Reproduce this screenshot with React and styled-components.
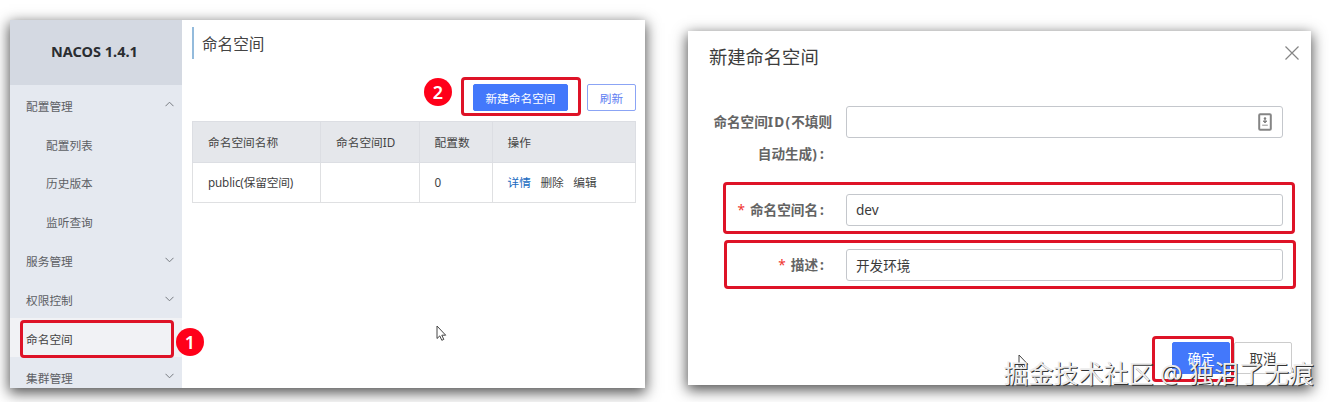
import React from "react";
import styled, { createGlobalStyle, css } from "styled-components";

const GlobalStyle = createGlobalStyle`
  *, *::before, *::after { box-sizing: border-box; }
  body {
    margin: 0;
    background: #fff;
    overflow: hidden;
    font-family: "Noto Sans", "Noto Sans CJK SC", sans-serif;
    color: #444;
  }
`;

const Stage = styled.main`
  position: relative;
  display: flex;
  align-items: flex-start;
  gap: 43px;
  width: 1329px;
  height: 402px;
  padding: 20px 0 0 10px;
  overflow: hidden;
`;

const Window = styled.section`
  flex: none;
  background: #fff;
  box-shadow: 0 4px 13px 1px rgba(0, 0, 0, 0.68);
`;

const ConsoleWindow = styled(Window)`
  display: flex;
  width: 635px;
  height: 368px;
`;

const Sidebar = styled.nav`
  flex: none;
  width: 172px;
  height: 100%;
  overflow: hidden;
  background: #e5e9f0;
`;

const Brand = styled.div`
  height: 65px;
  padding-left: 41px;
  line-height: 62px;
  background: #d4d9e2;
  color: #2a2d31;
  font-size: 14.5px;
  font-weight: 700;
  white-space: nowrap;
`;

const MenuItem = styled.div`
  display: flex;
  align-items: center;
  justify-content: space-between;
  height: 38.9px;
  padding: 1.5px 8.5px 0 ${(p) => (p.$nested ? 36 : 16)}px;
  font-size: 11.7px;
  color: ${(p) => (p.$active ? "#444" : "#5d6064")};
  background: ${(p) => (p.$active ? "#f1f2f5" : "transparent")};
`;

const MenuArrow = styled.svg`
  width: 9px;
  height: 6px;
  margin-bottom: 2px;
  fill: none;
  stroke: #777b80;
  stroke-width: 1;
  transform: ${(p) => (p.$up ? "rotate(180deg)" : "none")};
`;

const Content = styled.div`
  flex: 1;
  min-width: 0;
  padding: 7px 10px 0 10px;
`;

const PageTitle = styled.h1`
  height: 32px;
  margin: 0;
  padding-left: 8px;
  border-left: 2px solid #94bbdc;
  font-size: 15.6px;
  font-weight: 400;
  line-height: 34px;
  color: #444;
`;

const Toolbar = styled.div`
  display: flex;
  justify-content: flex-end;
  gap: 19px;
  height: 27px;
  margin: 25px -1px 10px 0;
`;

const Button = styled.button`
  display: flex;
  align-items: center;
  justify-content: center;
  width: ${(p) => p.$width}px;
  height: ${(p) => p.$height || 27}px;
  padding: 0 0 1px;
  border: 1px solid #8ba4f5;
  border-radius: 2px;
  background: #fff;
  color: #5f80f2;
  font: ${(p) => p.$size || 11.7}px "Noto Sans", "Noto Sans CJK SC", sans-serif;
  ${(p) => p.$kind === "primary" && css`
    border-color: #4378fb;
    background: #4378fb;
    color: #fff;
  `}
  ${(p) => p.$kind === "normal" && css`
    border-color: #ccc;
    color: #3c3c3c;
  `}
`;

const Table = styled.table`
  width: 443px;
  border-collapse: collapse;
  table-layout: fixed;
  font-size: 11.7px;
`;

const HeadCell = styled.th`
  width: ${(p) => p.$width}px;
  height: 40.5px;
  padding: 0 0 1px 15px;
  border: 1px solid #dcdee3;
  background: #e5e7eb;
  color: #444;
  font-weight: 400;
  text-align: left;
`;

const Cell = styled.td`
  height: 40.5px;
  padding: 0 0 1px 15px;
  border: 1px solid #dfe0e2;
  color: #3f3f3f;
`;

const Actions = styled.div`
  display: flex;
  gap: 9.5px;
`;

const Action = styled.span`
  color: ${(p) => (p.$link ? "#206bbf" : "#444")};
`;

const Namespace = styled.span`
  letter-spacing: -0.15px;
`;

const DialogWindow = styled(Window)`
  display: flex;
  flex-direction: column;
  width: 623px;
  height: 354px;
  margin-top: 11px;
  padding: 12px 12px 0 0;
`;

const DialogHeader = styled.header`
  display: flex;
  justify-content: space-between;
  align-items: flex-start;
  padding-left: 21px;
  height: 63px;
`;

const DialogTitle = styled.h2`
  margin: 0;
  font-size: 18.3px;
  font-weight: 400;
  line-height: 28px;
  color: #3c3c3c;
`;

const CloseIcon = styled.svg`
  width: 14px;
  height: 14px;
  margin-top: 3px;
  stroke: #858585;
  stroke-width: 1.2;
`;

const FormRow = styled.div`
  display: flex;
  height: ${(p) => p.$height}px;
  padding-right: 16px;
`;

const Label = styled.label`
  display: flex;
  flex-direction: column;
  align-items: flex-end;
  width: 137px;
  margin-right: 21px;
  font-size: 13.6px;
  font-weight: 700;
  line-height: 32px;
  color: #646464;
  white-space: nowrap;
`;

const LabelLine = styled.span`
  margin-right: ${(p) => (p.$overhang ? -7 : 0)}px;
`;

const Latin = styled.span`
  letter-spacing: 1.2px;
`;

const Colon = styled.span`
  display: inline-block;
  width: 5px;
  margin-left: 2px;
`;

const Required = styled.span`
  margin-right: 5px;
  color: #f0342f;
  font-weight: 400;
`;

const Field = styled.div`
  display: flex;
  align-items: center;
  flex: 1;
  height: 32px;
  padding: 0 10px 1px 9px;
  border: 1px solid #c4c7cc;
  border-radius: 3px;
  font-size: 13.6px;
  color: #3a3a3a;
`;

const FieldIcon = styled.svg`
  width: 14px;
  height: 18px;
  margin-left: auto;
`;

const DialogFooter = styled.footer`
  display: flex;
  justify-content: flex-end;
  gap: 4px;
  margin-top: 5px;
  padding-right: 7px;
`;

const Highlight = styled.div`
  position: absolute;
  left: ${(p) => p.$x}px;
  top: ${(p) => p.$y}px;
  width: ${(p) => p.$w}px;
  height: ${(p) => p.$h}px;
  border: 3px solid #de1327;
  border-radius: 4px;
`;

const Badge = styled.div`
  position: absolute;
  left: ${(p) => p.$x}px;
  top: ${(p) => p.$y}px;
  width: 28px;
  height: 28px;
  border-radius: 50%;
  background: #ff0019;
  color: #fff;
  font: 600 18px/28px "Noto Sans", sans-serif;
  text-align: center;
`;

const Pointer = styled.svg`
  position: absolute;
  left: ${(p) => p.$x}px;
  top: ${(p) => p.$y}px;
  width: 11px;
  height: 17px;
`;

const Watermark = styled.div`
  position: absolute;
  left: 1003.5px;
  top: 355px;
  font: 25px/36px "Noto Sans", "Noto Sans CJK SC", sans-serif;
  color: #ececec;
  white-space: pre;
  text-shadow: 1px 1px 0 #333;
`;

function Arrow({ up }) {
  return (
    <MenuArrow viewBox="0 0 9 6" $up={up}>
      <path d="M.5 .8 4.5 4.8 8.5 .8" />
    </MenuArrow>
  );
}

function Mouse({ x, y }) {
  return (
    <Pointer viewBox="0 0 11 17" $x={x} $y={y}>
      <path d="M1 1v12.5l2.8-2.6 2 4.4 2-.9-2-4.2h3.9z" fill="#fff" stroke="#444" strokeWidth="1" />
    </Pointer>
  );
}

const menu = [
  { text: "配置管理", arrow: "up" },
  { text: "配置列表", nested: true },
  { text: "历史版本", nested: true },
  { text: "监听查询", nested: true },
  { text: "服务管理", arrow: "down" },
  { text: "权限控制", arrow: "down" },
  { text: "命名空间", active: true },
  { text: "集群管理", arrow: "down" },
];

export default function App() {
  return (
    <>
      <GlobalStyle />
      <Stage>
        <ConsoleWindow>
          <Sidebar>
            <Brand>NACOS 1.4.1</Brand>
            {menu.map((item) => (
              <MenuItem key={item.text} $nested={item.nested} $active={item.active}>
                {item.text}
                {item.arrow && <Arrow up={item.arrow === "up"} />}
              </MenuItem>
            ))}
          </Sidebar>
          <Content>
            <PageTitle>命名空间</PageTitle>
            <Toolbar>
              <Button $kind="primary" $width={95}>新建命名空间</Button>
              <Button $width={49}>刷新</Button>
            </Toolbar>
            <Table>
              <thead>
                <tr>
                  <HeadCell $width={128}>命名空间名称</HeadCell>
                  <HeadCell $width={98.5}>命名空间ID</HeadCell>
                  <HeadCell $width={73}>配置数</HeadCell>
                  <HeadCell $width={143.5}>操作</HeadCell>
                </tr>
              </thead>
              <tbody>
                <tr>
                  <Cell><Namespace>public(保留空间)</Namespace></Cell>
                  <Cell />
                  <Cell>0</Cell>
                  <Cell>
                    <Actions>
                      <Action $link>详情</Action>
                      <Action>删除</Action>
                      <Action>编辑</Action>
                    </Actions>
                  </Cell>
                </tr>
              </tbody>
            </Table>
          </Content>
        </ConsoleWindow>

        <DialogWindow>
          <DialogHeader>
            <DialogTitle>新建命名空间</DialogTitle>
            <CloseIcon viewBox="0 0 14 14">
              <path d="M.5 .5l13 13M13.5 .5l-13 13" />
            </CloseIcon>
          </DialogHeader>
          <FormRow $height={88}>
            <Label>
              <LabelLine $overhang>命名空间<Latin>ID(</Latin>不填则</LabelLine>
              <LabelLine>自动生成<Latin>)</Latin><Colon>:</Colon></LabelLine>
            </Label>
            <Field>
              <FieldIcon viewBox="0 0 14 18">
                <rect x="1.2" y="1.2" width="11.6" height="15.6" rx="1" fill="#fff" stroke="#858585" strokeWidth="2" />
                <circle cx="7" cy="5.5" r="1.2" fill="#777" />
                <path d="M7 5v4M5 8h4L7 10zM4.2 12.2h5.6" fill="#777" stroke="#888" strokeWidth=".9" />
              </FieldIcon>
            </Field>
          </FormRow>
          <FormRow $height={55}>
            <Label>
              <LabelLine><Required>*</Required>命名空间名<Colon>:</Colon></LabelLine>
            </Label>
            <Field>dev</Field>
          </FormRow>
          <FormRow $height={88}>
            <Label>
              <LabelLine><Required>*</Required>描述<Colon>:</Colon></LabelLine>
            </Label>
            <Field>开发环境</Field>
          </FormRow>
          <DialogFooter>
            <Button $kind="primary" $width={58} $height={32} $size={13.6}>确定</Button>
            <Button $kind="normal" $width={58} $height={32} $size={13.6}>取消</Button>
          </DialogFooter>
        </DialogWindow>

        <Highlight $x={20} $y={320} $w={154} $h={38} />
        <Highlight $x={461} $y={77} $w={120} $h={39} />
        <Highlight $x={723} $y={182} $w={572} $h={52} />
        <Highlight $x={724} $y={240} $w={572} $h={49} />
        <Highlight $x={1152} $y={336} $w={82} $h={46} />
        <Badge $x={176} $y={328}>1</Badge>
        <Badge $x={424} $y={78}>2</Badge>
        <Mouse x={436} y={325} />
        <Mouse x={1018} y={354} />
        <Watermark>掘金技术社区 @ 独泪了无痕</Watermark>
      </Stage>
    </>
  );
}
